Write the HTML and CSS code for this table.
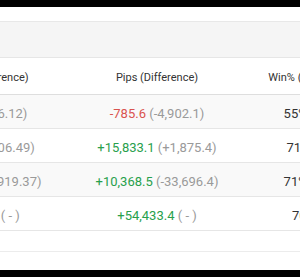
FILE: index.html
```html
<!DOCTYPE html>
<html lang="en">
<head>
<meta charset="utf-8">
<title>Stats</title>
<link rel="stylesheet" href="styles.css">
</head>
<body>
<div class="screen">
  <div class="panel">
    <div class="panel-heading"></div>
    <div class="scroller">
      <table class="stats">
        <colgroup>
          <col class="c-profit">
          <col class="c-pips">
          <col class="c-win">
        </colgroup>
        <thead>
          <tr>
            <th>Profit (Difference)</th>
            <th>Pips (Difference)</th>
            <th>Win% (Difference)</th>
          </tr>
        </thead>
        <tbody>
          <tr class="odd">
            <td><span class="neg">-71.37</span> <span class="diff">(-26.12)</span></td>
            <td><span class="neg">-785.6</span> <span class="diff">(-4,902.1)</span></td>
            <td><span class="val">55%</span> <span class="diff">(-2%)</span></td>
          </tr>
          <tr>
            <td><span class="pos">+34.56</span> <span class="diff">(+106.49)</span></td>
            <td><span class="pos">+15,833.1</span> <span class="diff">(+1,875.4)</span></td>
            <td><span class="val">71%</span> <span class="diff">(+6)</span></td>
          </tr>
          <tr class="odd">
            <td><span class="pos">+204.18</span> <span class="diff">(-1,919.37)</span></td>
            <td><span class="pos">+10,368.5</span> <span class="diff">(-33,696.4)</span></td>
            <td><span class="val">71%</span> <span class="diff">(-1%)</span></td>
          </tr>
          <tr>
            <td><span class="pos">+512.34</span> <span class="diff">( - )</span></td>
            <td><span class="pos">+54,433.4</span> <span class="diff">( - )</span></td>
            <td><span class="val">70%</span> <span class="diff">(-)</span></td>
          </tr>
          <tr class="spacer">
            <td></td><td></td><td></td>
          </tr>
        </tbody>
      </table>
    </div>
  </div>
</div>
</body>
</html>
```
FILE: styles.css
```css
html, body {
  margin: 0;
  padding: 0;
  background: #000;
}
body {
  font-family: Roboto, "Liberation Sans", sans-serif;
  font-size: 13px;
  color: #333;
}
.screen {
  margin: 7px 0;
  height: 263px;
  background: #fff;
  padding-top: 14px;
  box-sizing: border-box;
  overflow: hidden;
}
.panel {
  border-top: 1px solid #e8e8e8;
}
.panel-heading {
  height: 35px;
  background: #f5f5f5;
  border-bottom: 1px solid #e6e6e6;
}
.scroller {
  overflow: hidden;
}
.stats {
  margin-left: -117px;
  border-collapse: collapse;
  table-layout: fixed;
  width: 514px;
}
.c-profit { width: 204px; }
.c-pips { width: 140px; }
.c-win { width: 170px; }
.stats th {
  font-weight: normal;
  font-size: 11px;
  color: #333;
  height: 32px;
  padding: 4px 4px 0;
  line-height: 16px;
  text-align: center;
  white-space: nowrap;
  border-bottom: 1px solid #dedede;
}
.stats td {
  height: 29px;
  padding: 4px 4px 0;
  line-height: 16px;
  text-align: center;
  white-space: nowrap;
  border-top: 1px solid #e6e6e6;
}
.stats tr.odd td {
  background: #f9f9f9;
}
.stats tr.spacer td {
  height: 16px;
  border-bottom: 1px solid #ececec;
}
.neg { color: #d9534f; }
.pos { color: #28a04c; }
.val { color: #333; }
.diff { color: #9a9a9a; }
```
